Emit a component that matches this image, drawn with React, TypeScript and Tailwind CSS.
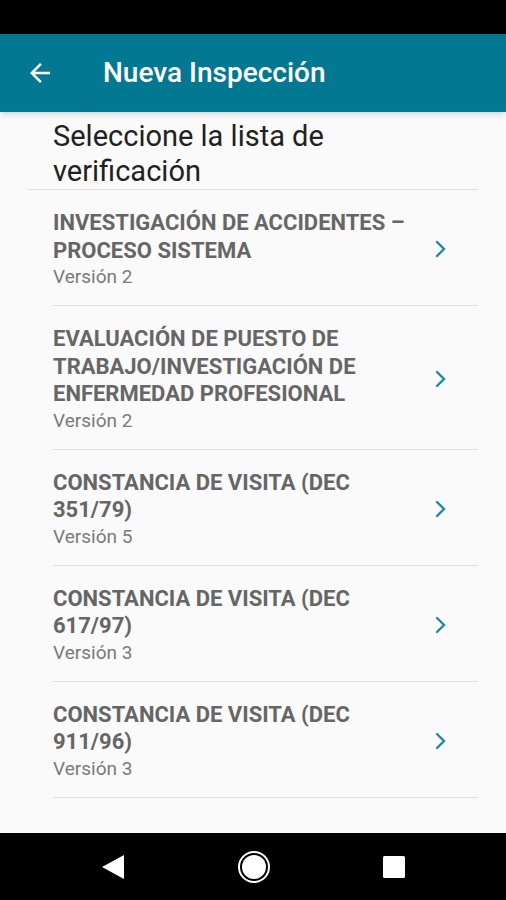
import React from 'react';

const items = [
  { title: 'INVESTIGACIÓN DE ACCIDENTES – PROCESO SISTEMA', version: 'Versión 2' },
  { title: 'EVALUACIÓN DE PUESTO DE TRABAJO/INVESTIGACIÓN DE ENFERMEDAD PROFESIONAL', version: 'Versión 2' },
  { title: 'CONSTANCIA DE VISITA (DEC 351/79)', version: 'Versión 5' },
  { title: 'CONSTANCIA DE VISITA (DEC 617/97)', version: 'Versión 3' },
  { title: 'CONSTANCIA DE VISITA (DEC 911/96)', version: 'Versión 3' },
];

export default function App() {
  return (
    <div
      className="w-[506px] h-[900px] flex flex-col bg-[#fafafa] overflow-hidden"
      style={{ fontFamily: 'Roboto, "Noto Sans", sans-serif' }}
    >
      {/* barra de estado */}
      <div className="h-[34px] bg-black shrink-0" />

      {/* app bar */}
      <div className="h-[78px] shrink-0 bg-[#037892] flex items-center shadow-md">
        <div className="w-[103px] pl-[25px] flex items-center">
          <svg width="30" height="30" viewBox="0 0 24 24" fill="#fff">
            <path d="M20 11H7.83l5.59-5.59L12 4l-8 8 8 8 1.41-1.41L7.83 13H20v-2z" />
          </svg>
        </div>
        <span className="text-white text-[28px] font-medium leading-none">
          Nueva Inspección
        </span>
      </div>

      {/* contenido */}
      <div className="flex-1 flex flex-col">
        <p className="pl-[53px] pr-6 pt-[7px] pb-0 text-[29px] leading-[35px] text-[#212121]">
          Seleccione la lista de
          <br />
          verificación
        </p>
        <div className="mx-[28px] border-b border-[#e0e0e0]" />
        <div className="pl-[53px] pr-[28px]">
          {items.map((it) => (
            <div
              key={it.title}
              className="flex items-center border-b border-[#e0e0e0] pt-[19px] pb-[16px]"
            >
              <div className="flex-1 pr-[16px]">
                <p className="text-[22px] leading-[27.5px] font-bold text-[#666666]">
                  {it.title}
                </p>
                <p className="text-[19px] leading-[24px] text-[#7a7a7a] mt-[1px]">{it.version}</p>
              </div>
              <div className="w-[46px] flex justify-start">
                <svg width="16" height="20" viewBox="0 0 16 20" fill="none">
                  <path d="M5 3l7 7-7 7" stroke="#1f8a9e" strokeWidth="2.4" strokeLinecap="round" />
                </svg>
              </div>
            </div>
          ))}
        </div>
      </div>

      {/* barra de navegación */}
      <div className="h-[67px] shrink-0 bg-black flex items-center justify-center gap-[111px]">
        <svg width="26" height="28" viewBox="0 0 26 28">
          <path d="M24 2v24L2 14z" fill="#fff" />
        </svg>
        <svg width="34" height="34" viewBox="0 0 34 34">
          <circle cx="17" cy="17" r="15" fill="none" stroke="#fff" strokeWidth="2" />
          <circle cx="17" cy="17" r="12" fill="#fff" />
        </svg>
        <svg width="24" height="24" viewBox="0 0 24 24">
          <rect x="1" y="1" width="22" height="22" rx="1.5" fill="#fff" />
        </svg>
      </div>
    </div>
  );
}
